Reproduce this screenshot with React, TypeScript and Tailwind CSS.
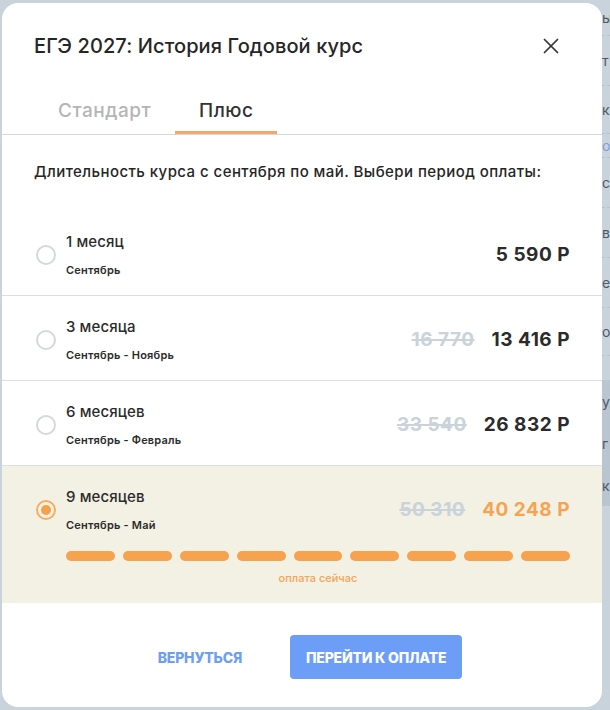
import { X } from 'lucide-react'

type Plan = {
  title: string
  period: string
  old?: string
  price: string
  selected?: boolean
}

const plans: Plan[] = [
  { title: '1 месяц', period: 'Сентябрь', price: '5 590 Р' },
  { title: '3 месяца', period: 'Сентябрь - Ноябрь', old: '16 770', price: '13 416 Р' },
  { title: '6 месяцев', period: 'Сентябрь - Февраль', old: '33 540', price: '26 832 Р' },
  { title: '9 месяцев', period: 'Сентябрь - Май', old: '50 310', price: '40 248 Р', selected: true },
]

// обрывки страницы под модалкой, видны справа
const behind = [
  { t: 'ы', h: 'h-[36px]' },
  { t: 'т', h: 'h-[50px]' },
  { t: 'к', h: 'h-[48px]' },
  { t: 'о', h: 'h-[24px]', blue: true },
  { t: 'с', h: 'h-[50px]' },
  { t: 'в', h: 'h-[50px]' },
  { t: 'е', h: 'h-[50px]' },
  { t: 'о', h: 'h-[48px]' },
]

function Radio({ on }: { on?: boolean }) {
  if (on) {
    return (
      <span className="w-[20px] h-[20px] shrink-0 rounded-full border-[2.5px] border-[#f8ad62] flex items-center justify-center">
        <span className="w-[10px] h-[10px] rounded-full bg-[#f7a04c]" />
      </span>
    )
  }
  return <span className="w-[20px] h-[20px] shrink-0 rounded-full border-[2.5px] border-[#d5d8da]" />
}

function PlanRow({ plan }: { plan: Plan }) {
  return (
    <div
      className={
        plan.selected
          ? 'bg-[#f3f0e4] pl-[34px] pr-8 pt-[21px] pb-[18px]'
          : 'pl-[34px] pr-8 pt-[21px] pb-[17px] border-b border-[#dcdfe1]'
      }
    >
      <div className="flex items-center gap-[10px]">
        <Radio on={plan.selected} />
        <div className="flex-1">
          <div className="text-[15px] leading-[20px] font-medium tracking-[0.1px] text-[#2b2b2b]">{plan.title}</div>
          <div className="mt-[10px] text-[11px] leading-[16px] font-semibold tracking-[0.2px] text-[#2b2b2b]">{plan.period}</div>
        </div>
        <div className="flex items-center gap-[17px] text-[19px] leading-[24px] font-bold tracking-[0.5px]">
          {plan.old && <span className="text-[#c9d3da] line-through decoration-2">{plan.old}</span>}
          <span className={plan.selected ? 'text-[#f6a352]' : 'text-[#2b2b2b]'}>{plan.price}</span>
        </div>
      </div>
      {plan.selected && (
        <div className="ml-[30px]">
          <div className="mt-[18px] flex gap-2">
            {Array.from({ length: 9 }).map((_, i) => (
              <span key={i} className="flex-1 h-[10px] rounded-full bg-[#f7a24f]" />
            ))}
          </div>
          <div className="mt-[10px] text-center text-[11px] leading-[14px] font-medium text-[#f4a55a]">оплата сейчас</div>
        </div>
      )}
    </div>
  )
}

export default function App() {
  return (
    <div className="relative w-[610px] h-[710px] overflow-hidden bg-[#c9d3dc]" style={{ fontFamily: 'Inter, "Noto Sans", sans-serif' }}>
      <div className="flex justify-end">
        <div className="w-[8px] overflow-hidden flex flex-col text-[14px] text-[#4f5963]">
          {behind.map((b, i) => (
            <div key={i} className={`${b.h} flex items-center border-b border-dashed border-[#b7c2cb] ${b.blue ? 'text-[#7d9fdc]' : ''}`}>
              {b.t}
            </div>
          ))}
          <div className="h-[24px]" />
          <div className="h-[126px] bg-[#b9c6d1] flex flex-col justify-around">
            <span>у</span>
            <span>г</span>
            <span>к</span>
          </div>
        </div>
      </div>

      <div className="absolute left-[2px] top-[3px] w-[600px] h-[704px] bg-white rounded-[16px] overflow-hidden flex flex-col">
        <div className="px-8 pt-[29px] flex items-center justify-between">
          <h1 className="text-[20px] leading-[28px] font-medium tracking-[0.1px] text-[#262626]">ЕГЭ 2027: История Годовой курс</h1>
          <X className="w-[26px] h-[26px] mr-[6px] text-[#333]" strokeWidth={1.6} />
        </div>

        <div className="mt-[39px] border-b border-[#d6d9db] px-8 flex">
          <div className="px-6 pb-[8px] border-b-[3px] border-transparent text-[19px] leading-[24px] font-medium tracking-[0.5px] text-[#b5b5b5]">Стандарт</div>
          <div className="px-6 pb-[8px] border-b-[3px] border-[#f0a96a] text-[19px] leading-[24px] font-medium tracking-[0.5px] text-[#333]">Плюс</div>
        </div>

        <p className="mt-[27px] px-8 text-[15px] leading-[20px] font-medium tracking-[0.44px] text-[#262626]">
          Длительность курса с сентября по май. Выбери период оплаты:
        </p>

        <div className="mt-[29px]">
          {plans.map((p) => (
            <PlanRow key={p.title} plan={p} />
          ))}
        </div>

        <div className="mt-8 flex justify-center gap-8">
          <button className="h-[44px] px-4 text-[14px] font-extrabold tracking-[-0.2px] text-[#6d9ef2]">ВЕРНУТЬСЯ</button>
          <button className="h-[44px] px-4 rounded-[4px] bg-[#6c9ef8] text-[14px] font-extrabold tracking-[-0.2px] text-white">
            ПЕРЕЙТИ К ОПЛАТЕ
          </button>
        </div>
      </div>
    </div>
  )
}
